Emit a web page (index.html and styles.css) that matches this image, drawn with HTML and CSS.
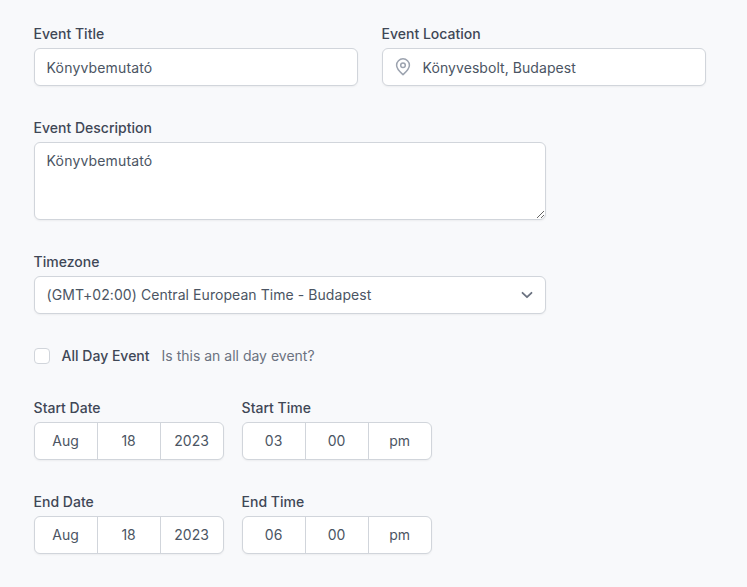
FILE: index.html
```html
<!DOCTYPE html>
<html lang="hu">
<head>
<meta charset="utf-8">
<title>Event</title>
<link rel="stylesheet" href="styles.css">
</head>
<body>
<form class="form">
  <div class="row">
    <div class="field">
      <label class="label" for="title">Event Title</label>
      <input class="control text-title" id="title" type="text" value="Könyvbemutató">
    </div>
    <div class="field">
      <label class="label" for="location">Event Location</label>
      <div class="icon-input">
        <svg class="pin" width="16" height="18" viewBox="0 0 16 18" fill="none" stroke="#9ca3af" stroke-width="1.5" stroke-linejoin="round">
          <path d="M8 16.600C5.800 14.600 1.600 11.200 1.600 7.200a6.400 6.400 0 0 1 12.800 0c0 4-4.200 7.400-6.400 9.400Z"/>
          <circle cx="8" cy="7.200" r="2.300"/>
        </svg>
        <input class="control control-icon" id="location" type="text" value="Könyvesbolt, Budapest">
      </div>
    </div>
  </div>

  <div class="field field-wide">
    <label class="label" for="desc">Event Description</label>
    <textarea class="control textarea text-title" id="desc">Könyvbemutató</textarea>
  </div>

  <div class="field field-wide">
    <label class="label" for="tz">Timezone</label>
    <div class="select-wrap">
      <select class="control select" id="tz">
        <option>(GMT+02:00) Central European Time - Budapest</option>
      </select>
      <svg class="chevron" width="12" height="8" viewBox="0 0 12 8" fill="none" stroke="#6b7280" stroke-width="1.800" stroke-linecap="round" stroke-linejoin="round">
        <path d="M1.500 1.800 6 6.200l4.500-4.400"/>
      </svg>
    </div>
  </div>

  <div class="check-row">
    <span class="checkbox"></span>
    <span class="check-label">All Day Event</span>
    <span class="check-hint">Is this an all day event?</span>
  </div>

  <div class="dt-row">
    <div>
      <div class="label">Start Date</div>
      <div class="segments"><span class="seg">Aug</span><span class="seg">18</span><span class="seg">2023</span></div>
    </div>
    <div>
      <div class="label">Start Time</div>
      <div class="segments"><span class="seg">03</span><span class="seg">00</span><span class="seg">pm</span></div>
    </div>
  </div>

  <div class="dt-row">
    <div>
      <div class="label">End Date</div>
      <div class="segments"><span class="seg">Aug</span><span class="seg">18</span><span class="seg">2023</span></div>
    </div>
    <div>
      <div class="label">End Time</div>
      <div class="segments"><span class="seg">06</span><span class="seg">00</span><span class="seg">pm</span></div>
    </div>
  </div>
</form>
</body>
</html>
```

FILE: styles.css
```css
* {
  box-sizing: border-box;
}

html,
body {
  margin: 0;
  height: 100%;
  overflow: hidden;
}

body {
  background: #f8f9fb;
  color: #374151;
  font-family: Inter, "Liberation Sans", sans-serif;
  font-size: 14px;
  line-height: 20px;
}

.form {
  display: flex;
  flex-direction: column;
  gap: 32px;
  padding: 24px 0 0 33.6px;
}

.row {
  display: flex;
  gap: 24px;
}

.row .field {
  width: 324px;
}

.field-wide {
  width: 512px;
}

.label {
  display: block;
  margin-bottom: 4px;
  color: #3f4756;
  font-weight: 500;
}

.control {
  display: block;
  width: 100%;
  height: 38px;
  padding: 0 12px;
  border: 1px solid #d1d5db;
  border-radius: 6px;
  background: #fff;
  box-shadow: 0 1px 2px rgba(0, 0, 0, 0.05);
  color: #4b5563;
  font: inherit;
  letter-spacing: 0.06px;
  outline: none;
}

.text-title {
  letter-spacing: 0.16px;
}

.icon-input {
  position: relative;
}

.pin {
  position: absolute;
  top: 9.500px;
  left: 13.600px;
}

.control-icon {
  padding-left: 40px;
}

.textarea {
  height: 78px;
  padding: 8px 12px;
  resize: vertical;
}

.select-wrap {
  position: relative;
}

.select {
  appearance: none;
}

.chevron {
  position: absolute;
  top: 15px;
  right: 13px;
  pointer-events: none;
}

.check-row {
  display: flex;
  align-items: center;
  height: 16px;
  margin-top: 2px;
}

.checkbox {
  width: 16px;
  height: 16px;
  margin-right: 12px;
  border: 1px solid #d1d5db;
  border-radius: 4px;
  background: #fff;
}

.check-label {
  margin-right: 12px;
  color: #3f4756;
  font-weight: 500;
}

.check-hint {
  color: #6b7280;
}

.dt-row {
  display: flex;
  gap: 18px;
}

.check-row + .dt-row {
  margin-top: 2px;
}

.segments {
  display: flex;
  width: 190px;
  height: 38px;
  border: 1px solid #d1d5db;
  border-radius: 6px;
  background: #fff;
  box-shadow: 0 1px 2px rgba(0, 0, 0, 0.05);
}

.seg {
  flex: 1 1 0;
  border-left: 1px solid #d1d5db;
  color: #4b5563;
  line-height: 36px;
  text-align: center;
}

.seg:first-child {
  border-left: 0;
}
```
